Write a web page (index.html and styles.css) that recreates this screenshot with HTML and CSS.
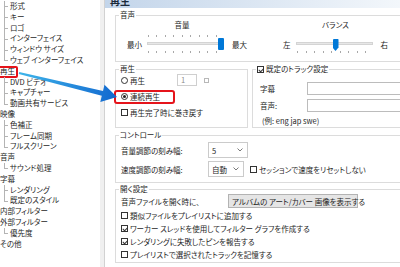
FILE: index.html
```html
<!DOCTYPE html>
<html lang="ja">
<head>
  <meta charset="UTF-8" />
  <title>オプション - 再生</title>
  <link rel="stylesheet" href="styles.css">
</head>
<body>
<div class="window">
  <ul class="tree">
    <li class="top">
      <ul class="kids">
        <li>形式</li>
        <li>キー</li>
        <li>ロゴ</li>
        <li>インターフェイス</li>
        <li>ウィンドウ サイズ</li>
        <li>ウェブ インターフェイス</li>
      </ul>
    </li>
    <li class="top"><span class="name mark">再生</span>
      <ul class="kids">
        <li>DVD ビデオ</li>
        <li>キャプチャー</li>
        <li>動画共有サービス</li>
      </ul>
    </li>
    <li class="top"><span class="name">映像</span>
      <ul class="kids">
        <li>色補正</li>
        <li>フレーム同期</li>
        <li>フルスクリーン</li>
      </ul>
    </li>
    <li class="top"><span class="name">音声</span>
      <ul class="kids">
        <li>サウンド処理</li>
      </ul>
    </li>
    <li class="top"><span class="name">字幕</span>
      <ul class="kids">
        <li>レンダリング</li>
        <li>既定のスタイル</li>
      </ul>
    </li>
    <li class="top"><span class="name">内部フィルター</span></li>
    <li class="top"><span class="name">外部フィルター</span>
      <ul class="kids">
        <li>優先度</li>
      </ul>
    </li>
    <li class="top"><span class="name">その他</span></li>
  </ul>

  <div class="splitter"></div>

  <div class="pane">
    <div class="pane-head"><span>再生</span></div>
    <div class="pane-body">

      <fieldset class="gb">
        <legend>音声</legend>
        <div class="sliders">
          <div class="slider-block vol">
            <div class="slider-title">音量</div>
            <div class="slider-row">
              <span>最小</span>
              <div class="slider">
                <div class="ticks"></div>
                <div class="track"></div>
                <div class="ticks"></div>
                <div class="thumb" style="left: 73px"></div>
              </div>
              <span>最大</span>
            </div>
          </div>
          <div class="slider-block bal">
            <div class="slider-title">バランス</div>
            <div class="slider-row">
              <span>左</span>
              <div class="slider">
                <div class="ticks off"></div>
                <div class="track"></div>
                <div class="ticks"></div>
                <div class="thumb pointer" style="left: 39px"></div>
              </div>
              <span>右</span>
            </div>
          </div>
        </div>
      </fieldset>

      <div class="gb-row">
        <fieldset class="gb gb-play">
          <legend>再生</legend>
          <div class="play-body">
            <div class="opt">
              <label class="opt-label wide"><i class="radio"></i>再生</label>
              <div class="spin">1</div>
              <i class="spin-btn"></i>
            </div>
            <div class="opt">
              <label class="opt-label mark"><i class="radio on"></i>連続再生</label>
            </div>
            <div class="opt">
              <label class="opt-label"><i class="chk"></i>再生完了時に巻き戻す</label>
            </div>
          </div>
        </fieldset>

        <fieldset class="gb gb-track">
          <legend><i class="chk on"></i>既定のトラック設定</legend>
          <div class="track-body">
            <div class="field-row"><span class="field-label">字幕</span><div class="field"></div></div>
            <div class="field-row"><span class="field-label">音声:</span><div class="field"></div></div>
            <div class="note">(例: eng jap swe)</div>
          </div>
        </fieldset>
      </div>

      <fieldset class="gb gb-control">
        <legend>コントロール</legend>
        <div class="control-body">
          <div class="ctl-row">
            <span class="ctl-label">音量調節の刻み幅:</span>
            <div class="combo w40">5<svg width="6" height="4" viewBox="0 0 6 4"><polyline points="0.5,0.5 3,3 5.5,0.5" fill="none" stroke="#7a7a7a"/></svg></div>
          </div>
          <div class="ctl-row">
            <span class="ctl-label">速度調節の刻み幅:</span>
            <div class="combo w36">自動<svg width="6" height="4" viewBox="0 0 6 4"><polyline points="0.5,0.5 3,3 5.5,0.5" fill="none" stroke="#7a7a7a"/></svg></div>
            <label class="opt-label session"><i class="chk"></i>セッションで速度をリセットしない</label>
          </div>
        </div>
      </fieldset>

      <fieldset class="gb gb-open">
        <legend>開く設定</legend>
        <div class="open-body">
          <div class="ctl-row">
            <span class="open-label">音声ファイルを開く時に、</span>
            <div class="combo btn">アルバムの アート/カバー 画像を表示する<svg width="6" height="4" viewBox="0 0 6 4"><polyline points="0.5,0.5 3,3 5.5,0.5" fill="none" stroke="#7a7a7a"/></svg></div>
          </div>
          <label class="check-row"><i class="chk"></i>類似ファイルをプレイリストに追加する</label>
          <label class="check-row"><i class="chk on"></i>ワーカー スレッドを使用してフィルター グラフを作成する</label>
          <label class="check-row"><i class="chk on"></i>レンダリングに失敗したピンを報告する</label>
          <label class="check-row"><i class="chk"></i>プレイリストで選択されたトラックを記憶する</label>
        </div>
      </fieldset>

    </div>
  </div>
</div>

<svg class="arrow" width="400" height="267" viewBox="0 0 400 267">
  <defs>
    <linearGradient id="arrowFill" x1="19" y1="73" x2="117" y2="97" gradientUnits="userSpaceOnUse">
      <stop offset="0" stop-color="#3db4ea"/>
      <stop offset="1" stop-color="#1268cf"/>
    </linearGradient>
  </defs>
  <polygon points="19.2,72 103,91 104.5,84.7 117,97 100.3,102.1 101.8,95.8 18.8,74" fill="url(#arrowFill)"/>
</svg>
</body>
</html>
```

FILE: styles.css
```css
body {
  margin: 0;
  width: 400px;
  height: 267px;
  overflow: hidden;
  position: relative;
  background: #fff;
  color: #1e1e1e;
  font-family: "Noto Sans CJK JP", sans-serif;
  font-size: 7.5px;
  font-feature-settings: "palt";
}

ul {
  list-style: none;
  margin: 0;
  padding: 0;
}

.window {
  display: flex;
  height: 267px;
}

/* left tree */
.tree {
  width: 100px;
  flex: none;
  padding-top: 1px;
  line-height: 10.8px;
  white-space: nowrap;
}

.tree .name {
  display: inline-block;
  padding-left: 0;
}

.kids li {
  position: relative;
  padding-left: 10px;
}

.kids li::before {
  content: "";
  position: absolute;
  left: 4px;
  top: 0;
  bottom: 0;
  border-left: 1px solid #b4b4b4;
}

.kids li:last-child::before {
  bottom: 50%;
}

.kids li::after {
  content: "";
  position: absolute;
  left: 4px;
  top: 50%;
  width: 4px;
  border-top: 1px solid #b4b4b4;
}

.mark {
  position: relative;
}

.tree .mark::before {
  content: "";
  position: absolute;
  left: -2px;
  right: -3px;
  top: 0;
  bottom: -1px;
  border: 2px solid #e5141b;
  border-radius: 2px;
}

.splitter {
  width: 4px;
  flex: none;
  background: #f0f0f0;
  border-right: 1px solid #d2d2d2;
}

/* right pane */
.pane {
  flex: 1;
  min-width: 0;
  overflow: hidden;
}

.pane-head {
  height: 8px;
  overflow: hidden;
  padding-left: 5px;
  background: linear-gradient(90deg, #c3d5ea, #f3f7fb);
}

.pane-head span {
  display: block;
  margin-top: -4px;
  line-height: 10px;
  font-size: 10px;
  font-weight: bold;
  color: #1b2a3a;
}

.pane-body {
  width: 300px;
  padding-left: 10px;
}

.gb {
  margin: 2px 0 0;
  padding: 0;
  min-width: 0;
  border: 1px solid #dcdcdc;
}

.gb legend {
  margin-left: 3px;
  padding: 0 1px;
  line-height: 10px;
}

/* sliders */
.sliders {
  display: flex;
  padding: 0 0 7px 11px;
}

.slider-block {
  display: flex;
  flex-direction: column;
  align-items: center;
}

.slider-title {
  line-height: 10px;
  margin-bottom: 4px;
}

.vol .slider-title {
  margin-right: 10px;
}

.bal {
  margin-left: 36px;
}

.slider-row {
  display: flex;
  align-items: center;
  gap: 3px;
}

.slider {
  position: relative;
  width: 84px;
  height: 20px;
}

.ticks {
  height: 2px;
  margin: 1px 5px 0 3px;
  background: repeating-linear-gradient(90deg, #a8a8a8 0 1px, transparent 1px 8.5px);
}

.ticks.off {
  visibility: hidden;
}

.track {
  height: 3px;
  margin: 5px 5px 0 2px;
  background: #e7e7e7;
  border: 1px solid #d4d4d4;
  box-sizing: border-box;
}

.track + .ticks {
  margin-top: 6px;
}

.thumb {
  position: absolute;
  top: 4px;
  width: 6px;
  height: 12px;
  background: #0078d7;
  border-radius: 1px;
}

.thumb.pointer {
  top: 5px;
  clip-path: polygon(0 0, 100% 0, 100% 70%, 50% 100%, 0 70%);
}

/* radio / checkbox */
.radio,
.chk {
  display: inline-block;
  flex: none;
  width: 7px;
  height: 7px;
  border: 1px solid #333;
  box-sizing: border-box;
  background: #fff;
  position: relative;
}

.radio {
  border-radius: 50%;
}

.radio.on::after {
  content: "";
  position: absolute;
  left: 1px;
  top: 1px;
  width: 3px;
  height: 3px;
  border-radius: 50%;
  background: #222;
}

.chk.on::after {
  content: "";
  position: absolute;
  left: 1.5px;
  top: 0;
  width: 1.5px;
  height: 3.5px;
  border-right: 1px solid #333;
  border-bottom: 1px solid #333;
  transform: rotate(45deg);
}

.opt-label {
  display: inline-flex;
  align-items: center;
  gap: 2px;
  white-space: nowrap;
}

/* 再生 group */
.gb-row {
  display: flex;
  gap: 4px;
}

.gb-play {
  width: 133px;
  box-sizing: border-box;
  flex: none;
}

.play-body {
  padding: 0 0 9px 5px;
}

.opt {
  display: flex;
  align-items: center;
  height: 12px;
  margin-bottom: 4px;
}

.opt:last-child {
  margin-bottom: 0;
}

.opt-label.wide {
  width: 56px;
}

.spin {
  width: 20px;
  height: 12px;
  box-sizing: border-box;
  border: 1px solid #cfcfcf;
  padding-left: 3px;
  line-height: 10px;
  color: #8a8a8a;
}

.spin-btn {
  width: 5px;
  height: 5px;
  margin-left: 7px;
  border: 1px solid #b8b8b8;
  box-sizing: border-box;
}

.opt-label.mark::before {
  content: "";
  position: absolute;
  left: -7px;
  right: -15px;
  top: -1px;
  bottom: -2px;
  border: 2px solid #e5141b;
  border-radius: 3px;
}

/* track defaults */
.gb-track {
  width: 163px;
  box-sizing: border-box;
  flex: none;
}

.gb-track legend {
  display: flex;
  align-items: center;
  gap: 2px;
}

.track-body {
  padding: 8px 0 0 7px;
}

.field-row {
  display: flex;
  align-items: center;
  margin-bottom: 4px;
}

.field-label {
  width: 47px;
  flex: none;
}

.field {
  flex: 1;
  height: 13px;
  box-sizing: border-box;
  border: 1px solid #bcbcbc;
}

.note {
  margin-top: 1px;
  padding-left: 2px;
  line-height: 10px;
}

/* controls */
.control-body {
  padding: 2px 0 5px 5px;
}

.ctl-row {
  display: flex;
  align-items: center;
}

.ctl-row + .ctl-row {
  margin-top: 3px;
}

.ctl-label {
  width: 87px;
  flex: none;
}

.combo {
  display: flex;
  align-items: center;
  justify-content: space-between;
  height: 16px;
  box-sizing: border-box;
  border: 1px solid #cbcbcb;
  padding: 0 4px 0 3px;
  background: #fff;
  white-space: nowrap;
}

.combo.w40 {
  width: 40px;
}

.combo.w36 {
  width: 36px;
}

.opt-label.session {
  margin-left: 6px;
}

.gb-open {
  margin-top: 1px;
}

.open-body {
  padding: 0 0 1px 5px;
}

.open-label {
  width: 107px;
  flex: none;
}

.combo.btn {
  width: 130px;
  height: 14px;
  background: #e5e5e5;
  border-color: #b3b3b3;
}

.check-row {
  display: flex;
  align-items: center;
  gap: 2px;
  height: 13px;
  white-space: nowrap;
}

.ctl-row + .check-row {
  margin-top: 1px;
}

/* annotation arrow */
.arrow {
  position: absolute;
  left: 0;
  top: 0;
  pointer-events: none;
}
```
